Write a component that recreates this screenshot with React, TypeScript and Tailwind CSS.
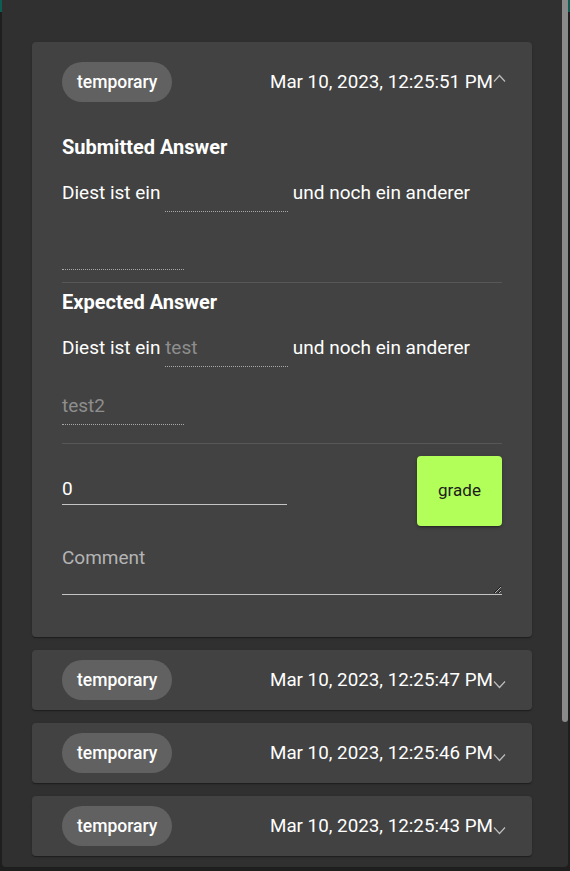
import React from 'react';

const Chevron = ({ open }: { open: boolean }) => (
  <div className={`flex h-[17px] -mr-[4px] ${open ? 'items-start' : 'items-end'}`}>
    <svg width="13" height="8" viewBox="0 0 13 8" className={open ? '' : 'rotate-180'}>
      <path d="M1 7.5 L6.5 1.5 L12 7.5" fill="none" stroke="#bdbdbd" strokeWidth="1.2" />
    </svg>
  </div>
);

const Header = ({ date, open }: { date: string; open: boolean }) => (
  <div className={`flex items-center justify-between ${open ? 'py-[20px]' : 'py-[10px]'}`}>
    <span className="h-[40px] rounded-full bg-[#616161] px-[15px] flex items-center text-[17.5px] font-medium text-white">
      temporary
    </span>
    <div className="flex items-center">
      <span className="text-[18.8px] text-white">{date}</span>
      <Chevron open={open} />
    </div>
  </div>
);

const Blank = ({ value, w }: { value?: string; w: string }) => (
  <span
    className={`inline-block ${w} align-baseline leading-[24px] pb-[6px] border-b border-dotted border-[#a8a8a8] text-[#8e8e8e]`}
  >
    {value || '\u00a0'}
  </span>
);

const cardShadow =
  'shadow-[0_2px_1px_-1px_rgba(0,0,0,0.2),0_1px_1px_0_rgba(0,0,0,0.14),0_1px_3px_0_rgba(0,0,0,0.12)]';

export default function App() {
  const others = ['Mar 10, 2023, 12:25:47 PM', 'Mar 10, 2023, 12:25:46 PM', 'Mar 10, 2023, 12:25:43 PM'];

  return (
    <div className="h-[871px] px-[2px] bg-[linear-gradient(#0d5e52_0_12px,#1e1e1e_12px)] font-['Roboto',sans-serif]">
      <div className="relative h-[867px] overflow-hidden rounded-b-[4px] bg-[#303030] pl-[30px] pr-[36px] pt-[42px] flex flex-col gap-[13px]">
        {/* expanded submission */}
        <div className={`rounded-[4px] bg-[#424242] px-[30px] pb-[42px] ${cardShadow}`}>
          <Header date="Mar 10, 2023, 12:25:51 PM" open />

          <h3 className="mt-[13px] text-[20px] leading-[24px] font-bold text-white">Submitted Answer</h3>
          <p className="mt-[5px] text-[19px] leading-[58px] text-white">
            Diest ist ein <Blank w="w-[123px]" /> und noch ein anderer <Blank w="w-[122px]" />
          </p>
          <div className="mt-[2px] h-px bg-[#575757]" />

          <h3 className="mt-[7px] text-[20px] leading-[24px] font-bold text-white">Expected Answer</h3>
          <p className="mt-[5px] text-[19px] leading-[58px] text-white">
            Diest ist ein <Blank value="test" w="w-[123px]" /> und noch ein anderer{' '}
            <Blank value="test2" w="w-[122px]" />
          </p>
          <div className="mt-[8px] h-px bg-[#575757]" />

          <div className="mt-[12px] flex items-start justify-between">
            <input
              readOnly
              value="0"
              className="mt-[16px] h-[33px] w-[225px] border-b border-[#c4c4c4] bg-transparent text-[19px] text-white outline-none"
            />
            <button className="h-[70px] w-[85px] rounded-[4px] bg-[#b2ff59] text-[17px] text-[#1c1c1c] shadow-[0_3px_1px_-2px_rgba(0,0,0,0.2),0_2px_2px_0_rgba(0,0,0,0.14),0_1px_5px_0_rgba(0,0,0,0.12)]">
              grade
            </button>
          </div>

          <textarea
            placeholder="Comment"
            className="mt-[20px] block h-[49px] w-full border-b border-[#c4c4c4] bg-transparent text-[19px] leading-[24px] text-white placeholder:text-[#b4b4b4] outline-none"
          />
        </div>

        {others.map((d) => (
          <div key={d} className={`rounded-[4px] bg-[#424242] px-[30px] ${cardShadow}`}>
            <Header date={d} open={false} />
          </div>
        ))}

        {/* scrollbar thumb */}
        <div className="absolute right-0 top-0 h-[722px] w-[6px] rounded-b-[3px] bg-[#8a8a8a]" />
      </div>
    </div>
  );
}
